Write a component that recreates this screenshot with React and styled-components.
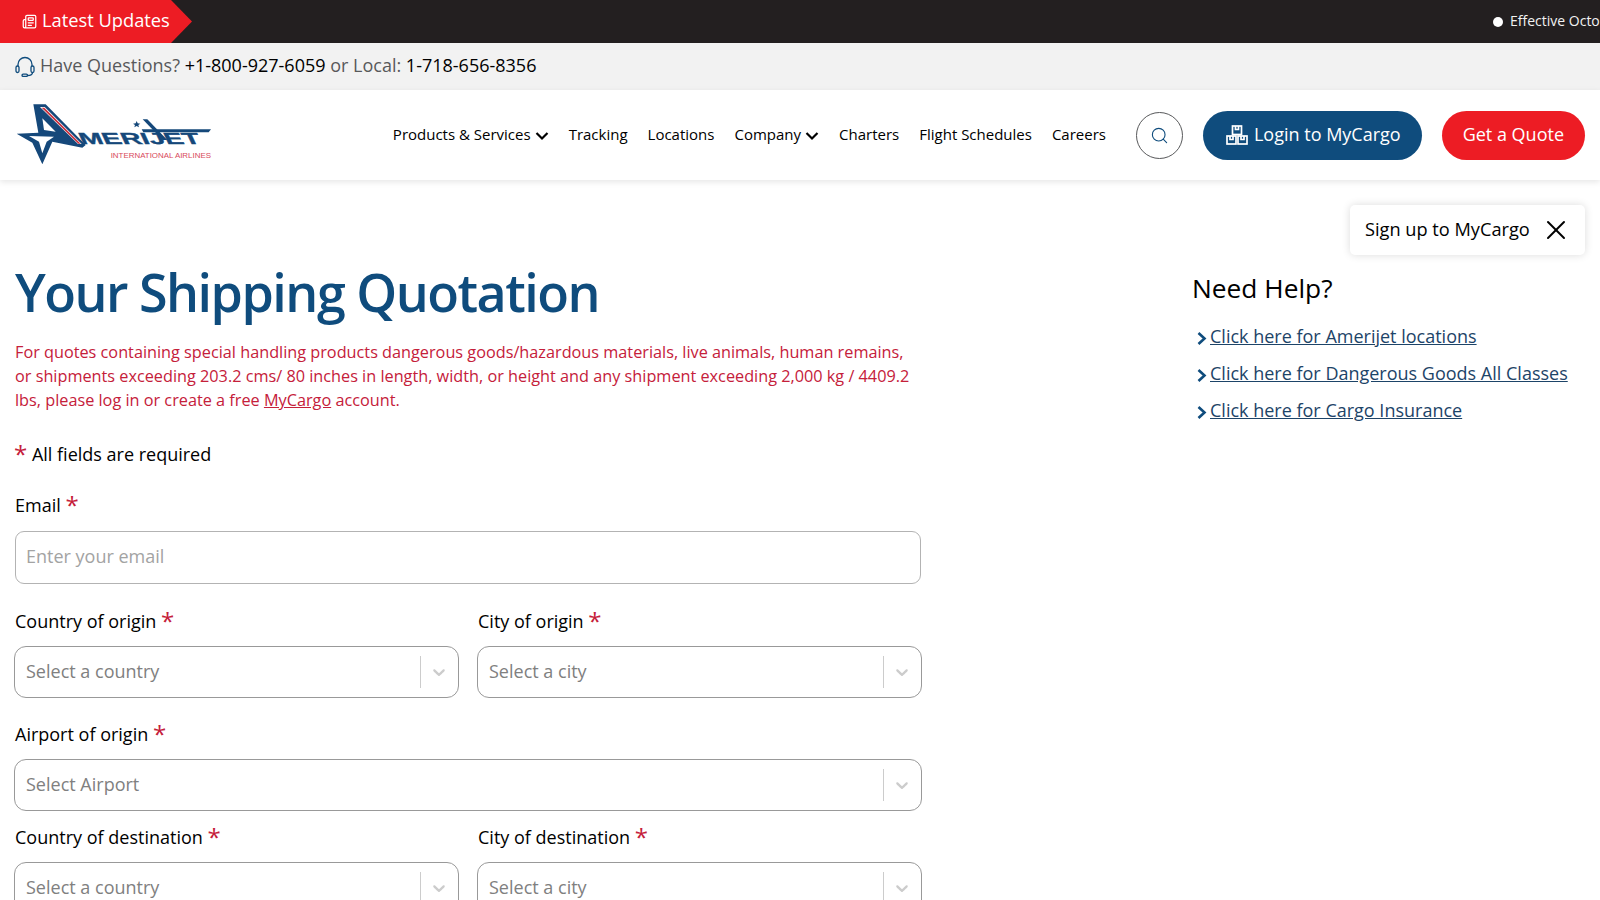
import React from "react";
import styled, { createGlobalStyle } from "styled-components";
import { Newspaper, Search, X } from "lucide-react";

const GlobalStyle = createGlobalStyle`
  html, body {
    margin: 0;
    height: 900px;
    overflow: hidden;
    background: #fff;
    font-family: "Open Sans", "Noto Sans", sans-serif;
    color: #000;
  }
  * { box-sizing: border-box; }
`;

const Page = styled.div`
  position: relative;
  width: 1600px;
  height: 900px;
  overflow: hidden;
`;

// ------------------------ TOP BARS ------------------------

const NewsBar = styled.div`
  height: 43px;
  background: #231f20;
  display: flex;
  align-items: center;
  justify-content: space-between;
`;

const NewsTag = styled.div`
  height: 43px;
  width: 192px;
  padding: 0 0 4px 22px;
  display: flex;
  align-items: center;
  gap: 5px;
  background: #ed1c24;
  color: #fff;
  font-size: 18.3px;
  clip-path: polygon(0 0, 171px 0, 100% 50%, 171px 100%, 0 100%);
  svg { margin-top: 4px; }
`;

const Ticker = styled.div`
  width: 107px;
  padding-bottom: 2px;
  overflow: hidden;
  white-space: nowrap;
  display: flex;
  align-items: center;
  gap: 7px;
  color: #f2f2f2;
  font-size: 14px;
`;

const Bullet = styled.span`
  flex: none;
  width: 10px;
  height: 10px;
  margin-top: 2px;
  border-radius: 50%;
  background: #fff;
`;

const InfoBar = styled.div`
  height: 47px;
  padding: 0 0 4px 15px;
  display: flex;
  align-items: center;
  gap: 5px;
  background: #f2f2f2;
  color: #58595b;
  font-size: 18px;
  svg { color: #0f4c7d; margin-top: 4px; }
`;

const Phone = styled.span`
  color: #000;
`;

// ------------------------ HEADER ------------------------

const Header = styled.header`
  height: 90px;
  padding: 0 15px 0 10px;
  display: flex;
  align-items: center;
  background: #fff;
  box-shadow: 0 2px 6px rgba(0, 0, 0, 0.1);
`;

const LogoMark = styled.svg`
  display: block;
  width: 210px;
  height: 80px;
`;

const Nav = styled.nav`
  margin-left: auto;
  padding-bottom: 2px;
  display: flex;
  align-items: center;
  gap: 20px;
  font-size: 15px;
`;

const NavItem = styled.a`
  display: flex;
  align-items: center;
  gap: 4px;
  color: #000;
`;

const MenuArrow = styled.svg`
  width: 14px;
  height: 10px;
  margin-top: 3px;
  fill: none;
  stroke: #000;
  stroke-width: 2.2;
`;

const SearchButton = styled.div`
  width: 47px;
  height: 47px;
  margin: 0 20px 0 30px;
  display: flex;
  align-items: center;
  justify-content: center;
  border: 1px solid #58595b;
  border-radius: 50%;
  color: #0f4c7d;
`;

const PillButton = styled.a`
  height: 49px;
  padding: 0 ${(p) => p.$right}px 2px ${(p) => p.$left}px;
  display: flex;
  align-items: center;
  gap: 6px;
  border-radius: 25px;
  background: ${(p) => p.$bg};
  color: #fff;
  font-size: 18px;
  svg { margin-top: 2px; }
`;

const QuoteButton = styled(PillButton)`
  margin-left: 20px;
`;

const Toast = styled.div`
  position: absolute;
  top: 205px;
  right: 15px;
  width: 235px;
  height: 50px;
  padding: 0 13px 2px 15px;
  display: flex;
  align-items: center;
  justify-content: space-between;
  background: #fff;
  border-radius: 5px;
  box-shadow: 0 0 8px rgba(0, 0, 0, 0.14);
  font-size: 18.2px;
  svg { margin-top: 2px; }
`;

// ------------------------ MAIN ------------------------

const Main = styled.main`
  padding: 76px 15px 0 14px;
  display: flex;
  justify-content: space-between;
`;

const FormColumn = styled.div`
  width: 908px;
`;

const Title = styled.h1`
  margin: 0 0 0 1px;
  color: #0f4c7d;
  font-size: 52px;
  line-height: 71px;
  font-weight: 600;
  letter-spacing: -1.5px;
`;

const Warning = styled.p`
  margin: 13px 0 0 1px;
  width: 905px;
  color: #c5203a;
  font-size: 16.25px;
  line-height: 24px;
  a { color: inherit; text-decoration: underline; }
`;

const RequiredNote = styled.div`
  margin: 26px 0 0;
  font-size: 18px;
  line-height: 32px;
`;

const Star = styled.span`
  position: relative;
  top: 2px;
  color: #c5203a;
  font-size: 24px;
  line-height: 20px;
`;

const Field = styled.div`
  margin-top: ${(p) => p.$top}px;
`;

const Label = styled.div`
  height: 32px;
  padding-left: 1px;
  font-size: 18px;
  line-height: 32px;
  margin-bottom: 9px;
`;

const EmailInput = styled.input`
  display: block;
  width: 906px;
  height: 53px;
  margin: 10px 0 0 1px;
  padding: 0 10px 4px;
  border: 1px solid #b3b3b3;
  border-radius: 9px;
  font: inherit;
  font-size: 18px;
  background: #fff;
  &::placeholder { color: #a3a3a3; opacity: 1; }
`;

const FieldRow = styled.div`
  margin-top: ${(p) => p.$top}px;
  display: grid;
  grid-template-columns: 445px 445px;
  column-gap: 18px;
`;

const SelectBox = styled.div`
  height: 52px;
  display: flex;
  align-items: center;
  border: 1px solid #999;
  border-radius: 12px;
  color: #808080;
  font-size: 18px;
  background: #fff;
`;

const SelectValue = styled.div`
  flex: 1;
  padding: 0 0 2px 11px;
`;

const SelectDivider = styled.span`
  width: 1px;
  height: 32px;
  background: #ccc;
`;

const SelectArrow = styled.svg`
  width: 20px;
  height: 20px;
  margin: 0 9px 0 8px;
  fill: #ccc;
`;

const HelpColumn = styled.aside`
  width: 393px;
  padding-top: 14px;
`;

const HelpTitle = styled.h2`
  margin: 0 0 11px;
  font-size: 26.3px;
  line-height: 36px;
  font-weight: 400;
`;

const HelpLink = styled.div`
  height: 37px;
  padding-left: 4px;
  display: flex;
  align-items: center;
  gap: 3px;
  font-size: 18px;
  color: #1d4468;
  a { color: inherit; text-decoration: underline; }
`;

const LinkArrow = styled.svg`
  width: 11px;
  height: 15px;
  margin-top: 5px;
  fill: none;
  stroke: #0f4c7d;
  stroke-width: 2.6;
`;

// ------------------------ DRAWINGS ------------------------

const Logo = () => (
  <LogoMark viewBox="0 0 630 240" role="img" aria-label="Amerijet International Airlines">
    <path
      fill="#15487a"
      d="M70 28 L107 28 L227 150 L217 158 L127 140 L97 208 L67 143 L20 116 L85 113 Z"
    />
    <path fill="#fff" d="M97 70 L137 110 L102 105 Z" />
    <path fill="#fff" d="M57 123 L132 125 L110 140 L97 175 L87 140 Z" />
    <path fill="#fff" d="M90 36 L104 36 L215 147 L204 147 Z" />
    <path fill="#c8313f" d="M95 38 L103 38 L212 146 L205 146 Z" />
    <path fill="#15487a" d="M395 103 L603 103 L596 112 L400 112 Z" />
    <path fill="#15487a" d="M398 73 L412 73 L472 135 L458 135 Z" />
    <path fill="#15487a" d="M380 78 L383 85 L391 86 L385 90 L387 97 L380 93 L373 97 L375 90 L369 86 L377 85 Z" />
    <text
      transform="translate(215 147) skewX(25)"
      fill="#15487a"
      stroke="#15487a"
      strokeWidth="1"
      fontFamily="Liberation Sans, sans-serif"
      fontWeight="700"
      fontSize="48"
      textLength="362"
      lengthAdjust="spacingAndGlyphs"
    >
      MERIJET
    </text>
    <text
      x="302"
      y="188"
      fill="#d8495a"
      fontFamily="Liberation Sans, sans-serif"
      fontSize="19"
      textLength="301"
      lengthAdjust="spacingAndGlyphs"
    >
      INTERNATIONAL AIRLINES
    </text>
  </LogoMark>
);

const HeadsetIcon = () => (
  <svg width="20" height="21" viewBox="0 0 20 21" fill="none" stroke="currentColor" strokeWidth="1.3">
    <path d="M3 10V8.5a7 7 0 0 1 14 0V10" />
    <rect x="1" y="10" width="3" height="6.5" rx="1.5" />
    <rect x="16" y="10" width="3" height="6.5" rx="1.5" />
    <path d="M17.5 16.5c0 2.3-2.5 3-5 3" />
    <rect x="7" y="18.2" width="5.5" height="2.2" rx="1.1" />
  </svg>
);

const BoxesIcon = () => (
  <svg width="22" height="20" viewBox="0 0 22 20" fill="none" stroke="#fff" strokeWidth="1.7">
    <rect x="6.5" y="1" width="9" height="8.5" />
    <rect x="1" y="11" width="9" height="8" />
    <rect x="12" y="11" width="9" height="8" />
    <path d="M9.5 1v3.5h3V1M4 11v3.5h3V11M15 11v3.5h3V11" />
  </svg>
);

const SelectField = ({ label, placeholder }) => (
  <div>
    <Label>
      {label} <Star>*</Star>
    </Label>
    <SelectBox>
      <SelectValue>{placeholder}</SelectValue>
      <SelectDivider />
      <SelectArrow viewBox="0 0 20 20">
        <path d="M4.516 7.548c0.436-0.446 1.043-0.481 1.576 0l3.908 3.747 3.908-3.747c0.533-0.481 1.141-0.446 1.574 0 0.436 0.445 0.408 1.197 0 1.615-0.406 0.418-4.695 4.502-4.695 4.502-0.217 0.223-0.502 0.335-0.787 0.335s-0.57-0.112-0.789-0.335c0 0-4.287-4.084-4.695-4.502s-0.436-1.17 0-1.615z" />
      </SelectArrow>
    </SelectBox>
  </div>
);

// ------------------------ DATA ------------------------

const navItems = [
  { label: "Products & Services", menu: true },
  { label: "Tracking" },
  { label: "Locations" },
  { label: "Company", menu: true },
  { label: "Charters" },
  { label: "Flight Schedules" },
  { label: "Careers" },
];

const helpLinks = [
  "Click here for Amerijet locations",
  "Click here for Dangerous Goods All Classes",
  "Click here for Cargo Insurance",
];

// ------------------------ COMPONENT ------------------------

const App = () => (
  <Page>
    <GlobalStyle />
    <NewsBar>
      <NewsTag>
        <Newspaper size={15} strokeWidth={2} />
        Latest Updates
      </NewsTag>
      <Ticker>
        <Bullet />
        Effective October
      </Ticker>
    </NewsBar>

    <InfoBar>
      <HeadsetIcon />
      <span>
        Have Questions? <Phone>+1-800-927-6059</Phone> or Local: <Phone>1-718-656-8356</Phone>
      </span>
    </InfoBar>

    <Header>
      <Logo />
      <Nav>
        {navItems.map((item) => (
          <NavItem key={item.label}>
            {item.label}
            {item.menu && (
              <MenuArrow viewBox="0 0 14 10">
                <path d="M1.5 2 L7 7.5 L12.5 2" />
              </MenuArrow>
            )}
          </NavItem>
        ))}
      </Nav>
      <SearchButton>
        <Search size={19} strokeWidth={1.4} />
      </SearchButton>
      <PillButton $bg="#0f4c7d" $left={23} $right={21}>
        <BoxesIcon />
        Login to MyCargo
      </PillButton>
      <QuoteButton $bg="#ed1c24" $left={21} $right={21}>
        Get a Quote
      </QuoteButton>
    </Header>

    <Toast>
      Sign up to MyCargo
      <X size={32} strokeWidth={1.5} />
    </Toast>

    <Main>
      <FormColumn>
        <Title>Your Shipping Quotation</Title>
        <Warning>
          For quotes containing special handling products dangerous goods/hazardous materials, live animals, human
          remains, or shipments exceeding 203.2 cms/ 80 inches in length, width, or height and any shipment exceeding
          2,000 kg / 4409.2 lbs, please log in or create a free <a>MyCargo</a> account.
        </Warning>
        <RequiredNote>
          <Star>*</Star> All fields are required
        </RequiredNote>
        <Field $top={19}>
          <Label>
            Email <Star>*</Star>
          </Label>
          <EmailInput placeholder="Enter your email" />
        </Field>
        <FieldRow $top={21}>
          <SelectField label="Country of origin" placeholder="Select a country" />
          <SelectField label="City of origin" placeholder="Select a city" />
        </FieldRow>
        <Field $top={20}>
          <SelectField label="Airport of origin" placeholder="Select Airport" />
        </Field>
        <FieldRow $top={10}>
          <SelectField label="Country of destination" placeholder="Select a country" />
          <SelectField label="City of destination" placeholder="Select a city" />
        </FieldRow>
      </FormColumn>

      <HelpColumn>
        <HelpTitle>Need Help?</HelpTitle>
        {helpLinks.map((link) => (
          <HelpLink key={link}>
            <LinkArrow viewBox="0 0 11 15">
              <path d="M2.5 2 L8.5 7.5 L2.5 13" />
            </LinkArrow>
            <a>{link}</a>
          </HelpLink>
        ))}
      </HelpColumn>
    </Main>
  </Page>
);

export default App;
